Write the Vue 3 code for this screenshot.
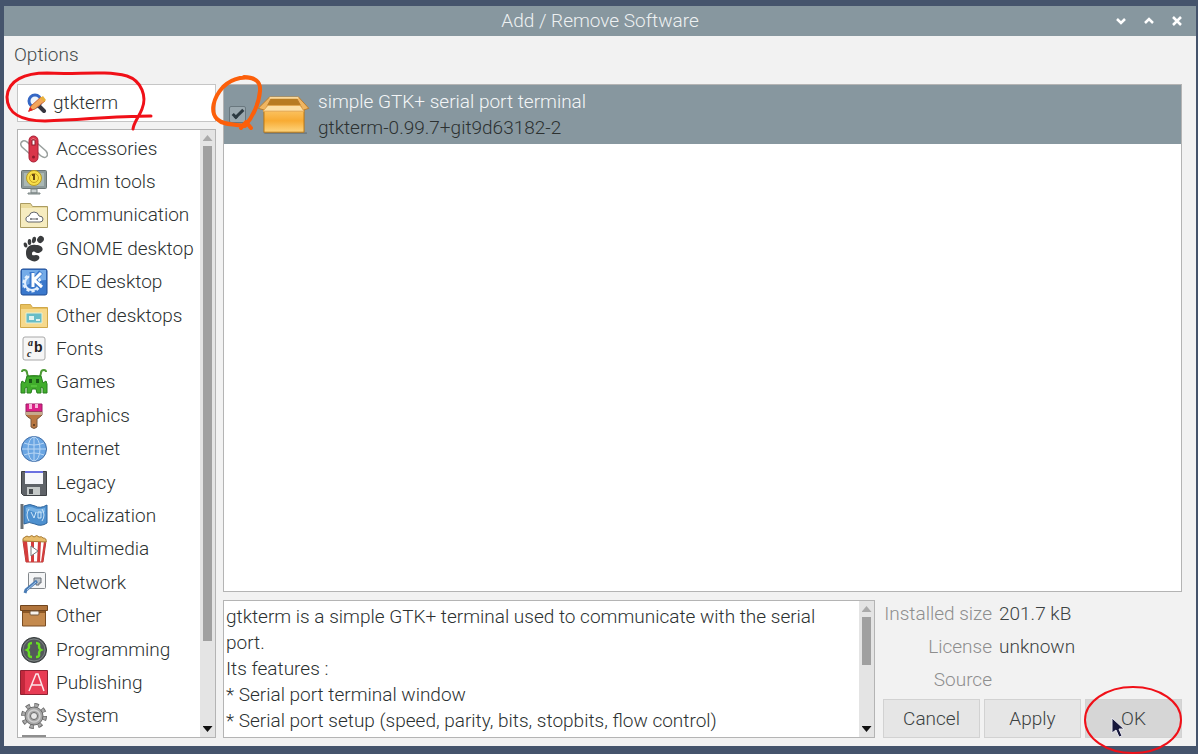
<template>
  <main class="desktop">
    <section class="window">
      <header class="titlebar">
        <h1>Add / Remove Software</h1>
        <div class="window-controls">
          <button type="button" aria-label="Minimize">
            <svg viewBox="0 0 12 12"><path d="M2 4l4 4 4-4" /></svg>
          </button>
          <button type="button" aria-label="Maximize">
            <svg viewBox="0 0 12 12"><path d="M2 8l4-4 4 4" /></svg>
          </button>
          <button type="button" aria-label="Close">
            <svg viewBox="0 0 12 12"><path d="M2 2l8 8M10 2l-8 8" /></svg>
          </button>
        </div>
      </header>

      <nav class="menubar">
        <button type="button">Options</button>
      </nav>

      <div class="body">
        <aside class="sidebar">
          <div class="search">
            <svg class="search-icon" viewBox="0 0 20 20" aria-hidden="true">
              <circle cx="8" cy="8" r="6" fill="#eef4fb" stroke="#3567c4" stroke-width="3" />
              <path d="M12 13l5 5" stroke="#35353f" stroke-width="4" stroke-linecap="round" />
              <path d="M2 18l2-5L14 4l4 4L8 16z" fill="#f3a55a" stroke="#c9683a" />
              <path d="M13 5l4 4 2-2-3-4z" fill="#e8b13c" />
              <path d="M1 19l2-5 3 3z" fill="#d22" />
            </svg>
            <input v-model="query" type="text" aria-label="Search packages" />
            <svg class="ink ink-search" viewBox="0 0 146 64" aria-hidden="true">
              <path d="M146 46C106 46 78 50 40 51C16 51 2 43 2 27C3 10 20 3 42 3C72 5 98 0 122 6C137 11 142 27 137 39C134 47 129 52 128 59" />
            </svg>
          </div>

          <div class="categories">
            <ul>
              <li v-for="item in categories" :key="item.name">
                <button type="button">
                  <svg viewBox="0 0 28 28" aria-hidden="true" v-html="item.icon"></svg>
                  <span>{{ item.name }}</span>
                </button>
              </li>
              <li class="peek"><i></i></li>
            </ul>
            <div class="scrollbar" aria-hidden="true">
              <i class="arrow up"></i>
              <div class="track"><i class="thumb" :style="{ height: listThumb + '%' }"></i></div>
              <i class="arrow down"></i>
            </div>
          </div>
        </aside>

        <div class="content">
          <div class="packages">
            <div class="package">
              <div class="tick">
                <input id="pkg" v-model="selected" type="checkbox" />
                <svg class="ink ink-tick" viewBox="0 0 54 60" aria-hidden="true">
                  <path d="M47 7C38 0 22 4 13 13C3 24 0 38 7 45C14 52 27 50 35 52C43 43 49 29 50 17C51 7 44 3 34 3M31 54L36 48L41 54" />
                </svg>
              </div>
              <svg class="box" viewBox="0 0 54 44" aria-hidden="true">
                <defs>
                  <linearGradient id="card" x1="0" y1="0" x2="0" y2="1">
                    <stop offset="0" stop-color="#fbc566" />
                    <stop offset=".5" stop-color="#f8ab33" />
                    <stop offset="1" stop-color="#fdd57f" />
                  </linearGradient>
                </defs>
                <path d="M5 40h46v2H7z" fill="#596168" opacity=".5" />
                <path d="M13 3h28l7 13H6z" fill="#9c6414" />
                <path d="M13 3h28l4 10H9z" fill="#b87c22" />
                <path d="M6 16h42v24H6z" fill="url(#card)" stroke="#b9730f" />
                <path d="M12 3L0 15l7 2 7-13zM42 3l11 12-6 2L40 4z" fill="#f0b560" stroke="#b87a2b" />
                <path d="M10 12h34l4 6H5z" fill="#fde0a6" stroke="#e2a650" />
                <path d="M12 4h30" stroke="#fbd99a" stroke-width="2" />
              </svg>
              <label for="pkg">
                <span class="summary">simple GTK+ serial port terminal</span>
                <span>gtkterm-0.99.7+git9d63182-2</span>
              </label>
            </div>
          </div>

          <div class="bottom">
            <div class="description">
              <div class="text">
                <p v-for="line in description" :key="line">{{ line }}</p>
              </div>
              <div class="scrollbar" aria-hidden="true">
                <i class="arrow up"></i>
                <div class="track"><i class="thumb" :style="{ height: textThumb + '%' }"></i></div>
                <i class="arrow down"></i>
              </div>
            </div>

            <div class="side">
              <dl>
                <template v-for="row in details" :key="row.label">
                  <dt>{{ row.label }}</dt>
                  <dd>{{ row.value }}</dd>
                </template>
              </dl>
              <div class="actions">
                <button type="button">Cancel</button>
                <button type="button">Apply</button>
                <button type="button" class="ok">
                  OK
                  <svg class="ink ink-ok" viewBox="0 0 100 70" aria-hidden="true">
                    <ellipse cx="50" cy="35" rx="48" ry="33" />
                  </svg>
                  <svg class="pointer" viewBox="0 0 14 21" aria-hidden="true">
                    <path d="M1 1v15l4-3 3 7 3-1-3-7h5z" fill="#17183c" stroke="#e8e8f0" />
                  </svg>
                </button>
              </div>
            </div>
          </div>
        </div>
      </div>
    </section>
  </main>
</template>

<script setup>
import { ref } from 'vue'

const query = ref('gtkterm')
const selected = ref(true)
const listThumb = 86
const textThumb = 46

const description = [
  'gtkterm is a simple GTK+ terminal used to communicate with the serial port.',
  'Its features :',
  '* Serial port terminal window',
  '* Serial port setup (speed, parity, bits, stopbits, flow control)',
]

const details = [
  { label: 'Installed size', value: '201.7 kB' },
  { label: 'License', value: 'unknown' },
  { label: 'Source', value: '' },
]

const categories = [
  {
    name: 'Accessories',
    icon: `<g fill="none" stroke="#9aa09e" stroke-width="1.5"><path d="M11 20L2 12q-3-4 1-6 3-1 8 5M17 8l9 8q3 4 0 6-3 2-9-5"/></g>
      <rect x="9" y="1" width="9" height="26" rx="4.5" fill="#d9364a" stroke="#a81f35"/>
      <path d="M11 5q2-3 5 0" stroke="#f08c95" fill="none"/><rect x="12" y="5" width="3" height="5" fill="#fff" stroke="#8d1c2c"/><circle cx="13.5" cy="22" r="1.5" fill="#8d1c2c"/>`,
  },
  {
    name: 'Admin tools',
    icon: `<rect x="1.5" y="2.5" width="25" height="18" rx="1" fill="#8d9a9a" stroke="#6a7575"/><path d="M4 5h20v13H4z" fill="#aab8b4"/>
      <path d="M11 21h6v4h-6zM8 25h12v1H8z" fill="#ccd3d3" stroke="#7b8584"/><circle cx="14" cy="10" r="7.5" fill="#f7df4b" stroke="#b79b24"/>
      <circle cx="14" cy="10" r="4.5" fill="none" stroke="#c79f20"/><path d="M14 6v6M12 7h2" stroke="#6a4b12" stroke-width="2"/>`,
  },
  {
    name: 'Communication',
    icon: `<path d="M.5 2.5h10l2 3h15v21H.5z" fill="#eadb9c" stroke="#ab9c62"/><path d="M1 7h26v19H1z" fill="#f6ecc0"/>
      <path d="M8 21q-3-1-2-4 1-2 3-2 1-4 5-4t5 4q4 0 4 3t-3 3z" fill="#fff" stroke="#62656b"/><path d="M10 18h8M11 17v2M17 17v2" stroke="#62656b"/>`,
  },
  {
    name: 'GNOME desktop',
    icon: `<g fill="#3a3c3e"><ellipse cx="5.5" cy="10" rx="1.8" ry="2.6" transform="rotate(-20 5.500 10)"/><ellipse cx="9.500" cy="7" rx="1.8" ry="3"/>
      <ellipse cx="14" cy="5" rx="2" ry="3.200" transform="rotate(10 14 5)"/><ellipse cx="20.500" cy="4.500" rx="3.200" ry="3.600" transform="rotate(35 20.500 4.500)"/>
      <path d="M6 18C6 12 10 9 16 10c5 0 8 3 6 6-2 2-5 3-7 1-2-1-3 0-3 2s2 1 4 1c3 0 4 2 3 4-2 3-6 3-9 1-3-1-4-4-4-7z"/></g>`,
  },
  {
    name: 'KDE desktop',
    icon: `<rect x="1" y="1" width="26" height="26" rx="2" fill="#3a78cc" stroke="#1d4a93"/><path d="M2 2h24v10Q14 12 2 20z" fill="#74abe8"/>
      <circle cx="12" cy="15" r="8" fill="none" stroke="#e2effd" stroke-width="3" stroke-dasharray="3 2"/><circle cx="12" cy="15" r="7" fill="none" stroke="#e2effd" stroke-width="2"/>
      <path d="M12 4v16M21 4l-7 8 8 8" stroke="#3a78cc" stroke-width="5" fill="none"/><path d="M13 5v14M21 5l-7 7 8 7" stroke="#fff" stroke-width="3" fill="none"/>`,
  },
  {
    name: 'Other desktops',
    icon: `<path d="M.5 2.5h10l2 3h15v20H.5z" fill="#e8c05e" stroke="#d0a84a"/><path d="M1 7h26v18H1z" fill="#f6d98c"/>
      <path d="M6 11h16v10H6z" fill="#69bdc7" stroke="#e7f0d4"/><path d="M9 14h5v4H9zM16 17h4v2h-4z" fill="#e0f3f0"/>`,
  },
  {
    name: 'Fonts',
    icon: `<rect x="3" y="2" width="22" height="23" rx="2" fill="#f6f6f6" stroke="#a8a8a8"/>
      <g fill="#222" font-weight="700"><text x="8" y="11" font-family="Liberation Serif" font-size="10" font-style="italic">a</text>
      <text x="14" y="17" font-family="Liberation Sans" font-size="14">b</text>
      <text x="7" y="22" font-family="Liberation Serif" font-size="10" font-style="italic">c</text></g>`,
  },
  {
    name: 'Games',
    icon: `<path d="M2 4q0-2 2-2 3 0 3 3l1 4q6-2 12 0l1-4q0-3 3-3 2 0 2 2" fill="none" stroke="#4d9a35" stroke-width="2"/>
      <path d="M7 8h14l2 7 3-2 1 3v9h-4v-5l-2-1v6h-4l-1-4h-4l-1 4H7v-6l-2 1v5H1v-9l1-3 3 2z" fill="#41ad2c" stroke="#267e1d"/>
      <path d="M9 11h3v4H9zM16 11h3v4h-3z" fill="#1a5b16"/><path d="M11 18h6" stroke="#6bd64c"/>`,
  },
  {
    name: 'Graphics',
    icon: `<path d="M6 2h16v8H6z" fill="#dc2087" stroke="#9c1c66"/><path d="M9 2v5h3V2M15 2v4h3V2" fill="#f8b5da"/>
      <path d="M6 10h16v3q-3 3-5 4v8q-3 3-6 0v-8q-4-2-5-4z" fill="#b97741" stroke="#7a5a40"/><path d="M6 10h16v3H6z" fill="#c6a98c"/><circle cx="14" cy="23" r="1" fill="#53331b"/>`,
  },
  {
    name: 'Internet',
    icon: `<circle cx="14" cy="14" r="12.5" fill="#6aa5e2" stroke="#3f6ca6"/><g fill="none" stroke="#b9d7f5"><ellipse cx="14" cy="14" rx="6" ry="12"/>
      <path d="M14 2v24M2 14h24M4 8q10 4 20 0M4 20q10-4 20 0"/></g>`,
  },
  {
    name: 'Legacy',
    icon: `<path d="M1.5 2.5h25v24h-23l-2-2z" fill="#5f6368" stroke="#3d4043"/><path d="M5 2h18v13H5z" fill="#f5f6fa"/><path d="M5 2h18v2H5z" fill="#6a70e0"/>
      <path d="M7 18h13v8H7z" fill="#c5c9c8"/><path d="M9 20h4v5H9z" fill="#4b4f52"/>`,
  },
  {
    name: 'Localization',
    icon: `<path d="M2 2v25" stroke="#6b7074" stroke-width="3"/><path d="M4 4q6-3 11 0t12-1v18q-6 4-12 1T4 22z" fill="#4d90cf" stroke="#2f659c"/>
      <path d="M6 6q4-2 8 0t11 0v4q-6 3-11 0T6 10z" fill="#78b2e4"/><path d="M9 7q-4 6 0 12M22 7q4 6 0 12" fill="none" stroke="#cfe6f8"/>
      <path d="M11 10l3 6 2-6M18 10v6h3v-6z" stroke="#cfe6f8" fill="none"/>`,
  },
  {
    name: 'Multimedia',
    icon: `<path d="M3 6h23l-3 21H6z" fill="#fff" stroke="#b13b36"/><path d="M3 6h4l2 21H6zM11 6h3v21h-3zM18 6h3l-1 21h-3zM24 6h2l-3 21h-2z" fill="#d43c3c"/>
      <path d="M3 6q-1-3 2-4 2-2 4 0 3-3 5 0 3-3 5 0 3-1 4 1 4 0 3 4z" fill="#e8bd6a" stroke="#a67a35"/><path d="M11 11l7 5-7 5z" fill="#fff" stroke="#777"/>`,
  },
  {
    name: 'Network',
    icon: `<rect x="8.500" y="3.500" width="17" height="16" rx="1" fill="#f4f5f6" stroke="#82878b"/><path d="M14 14V9h7v5h-2v2h-3v-2z" fill="#bcc3ca" stroke="#666d74"/>
      <path d="M17 12L6 21l-1 3" stroke="#4a7cb5" stroke-width="3" fill="none"/><path d="M16 13L7 21" stroke="#a8c8ea" fill="none"/>`,
  },
  {
    name: 'Other',
    icon: `<path d="M2.5 8h23v16h-23z" fill="#c48a4e" stroke="#7a4d22"/><path d="M.5 3.5h27v5H.5z" fill="#b0743c" stroke="#70451e"/>
      <path d="M3 9h22v2H3z" fill="#8e5926"/><rect x="10" y="9" width="9" height="4" rx="1" fill="#f6f2ec" stroke="#77593a"/>`,
  },
  {
    name: 'Programming',
    icon: `<circle cx="14" cy="14" r="12.5" fill="#53595a" stroke="#34393a"/><circle cx="14" cy="14" r="11" fill="none" stroke="#7c8382"/>
      <path d="M12 7q-4 0-3 4 0 2-2 3 2 1 2 3-1 4 3 4M16 7q4 0 3 4 0 2 2 3-2 1-2 3 1 4-3 4" fill="none" stroke="#66dd22" stroke-width="2.5"/>`,
  },
  {
    name: 'Publishing',
    icon: `<path d="M.5 1.5h27v24H.5z" fill="#e83c54" stroke="#8f2232"/><path d="M1 2h4v23H1z" fill="#c4283c"/>
      <path d="M9 22l7-17h2l6 17M12 16h10" fill="none" stroke="#fbe6e9" stroke-width="1.5"/>`,
  },
  {
    name: 'System',
    icon: `<circle cx="14" cy="14" r="10.5" fill="none" stroke="#6a6a6a" stroke-width="5" stroke-dasharray="4.2 4.046"/>
      <circle cx="14" cy="14" r="10.5" fill="none" stroke="#a9a9a9" stroke-width="3" stroke-dasharray="3 5.246" stroke-dashoffset="-.6"/>
      <circle cx="14" cy="14" r="9" fill="#a6a6a6" stroke="#6a6a6a"/><circle cx="14" cy="14" r="6" fill="none" stroke="#cfcfcf" stroke-width="1.5"/><circle cx="14" cy="14" r="3.5" fill="#e8e8e8" stroke="#666"/>`,
  },
]
</script>

<style>
body {
  background: #45546c;
}
</style>

<style scoped>
.desktop {
  box-sizing: border-box;
  display: flex;
  min-height: 100vh;
  padding: 6px 2px 8px 4px;
  background: #45546c;
  color: #2c3131;
  font-family: Roboto, "Noto Sans", sans-serif;
  font-size: 19px;
  font-weight: 300;
  line-height: 26px;
}

.desktop *,
.desktop *::before {
  box-sizing: border-box;
}

button,
input {
  color: inherit;
  font: inherit;
}

button {
  padding: 0;
  border: 0;
  background: none;
}

ul,
p,
dl,
dd,
h1 {
  margin: 0;
  padding: 0;
}

.window {
  display: flex;
  flex: 1;
  flex-direction: column;
  min-width: 0;
  background: #f2f2f2;
}

.titlebar {
  display: grid;
  grid-template-columns: 1fr auto 1fr;
  align-items: center;
  height: 30px;
  background: #87979f;
  color: #eef1f2;
}

.titlebar h1 {
  grid-column: 2;
  font-size: 19px;
  font-weight: 300;
}

.window-controls {
  display: flex;
  justify-content: flex-end;
  gap: 16px;
  padding-right: 13px;
}

.window-controls button {
  display: flex;
}

.window-controls svg {
  width: 12px;
  height: 12px;
  fill: none;
  stroke: #fff;
  stroke-width: 2.5;
}

.menubar {
  padding: 6px 10px 16px;
  color: #454b4b;
}

.menubar button {
  display: block;
}

.body {
  display: flex;
  flex: 1;
  gap: 7px;
  padding: 0 14px 8px 13px;
}

.sidebar {
  display: flex;
  flex: 0 0 199px;
  flex-direction: column;
  gap: 7px;
}

.search {
  position: relative;
  display: flex;
  align-items: center;
  gap: 6px;
  height: 38px;
  padding: 0 9px;
  border: 1px solid #c6c6c6;
  background: #fff;
}

.search-icon {
  flex: none;
  width: 20px;
  height: 20px;
}

.search input {
  width: 100%;
  min-width: 0;
  padding: 0;
  border: 0;
  outline: 0;
  background: none;
}

.ink {
  position: absolute;
  z-index: 2;
  overflow: visible;
  fill: none;
  stroke: #f01018;
  stroke-width: 3;
  stroke-linecap: round;
  stroke-linejoin: round;
  pointer-events: none;
}

.ink-search {
  top: -15px;
  left: -13px;
  width: 146px;
  height: 64px;
}

.categories {
  display: flex;
  flex: 1;
  border: 1px solid #b4b4b4;
  background: #fff;
}

.categories ul {
  display: flex;
  flex: 1;
  flex-direction: column;
  min-width: 0;
  padding-top: 2px;
  list-style: none;
}

.categories li {
  display: flex;
  flex: 1;
}

.categories li button {
  display: flex;
  align-items: center;
  gap: 8px;
  padding-left: 2px;
  white-space: nowrap;
}

.categories li svg {
  width: 28px;
  height: 28px;
}

.categories .peek {
  flex: 0 0 4px;
  padding: 2px 4px 0;
}

.peek i {
  width: 24px;
  background: #8f8f8f;
}

.scrollbar {
  display: flex;
  flex: 0 0 15px;
  flex-direction: column;
  align-items: center;
  background: #e4e4e4;
}

.track {
  flex: 1;
  width: 9px;
}

.thumb {
  display: block;
  background: #a0a0a0;
}

.arrow {
  width: 10px;
  height: 6px;
  margin: 5px 0;
}

.up {
  background: #aaa;
  clip-path: polygon(50% 0, 100% 100%, 0 100%);
}

.down {
  background: #111;
  clip-path: polygon(0 0, 100% 0, 50% 100%);
}

.content {
  display: flex;
  flex: 1;
  flex-direction: column;
  gap: 8px;
  min-width: 0;
}

.packages {
  flex: 1;
  border: 1px solid #b4b4b4;
  background: #fff;
}

.package {
  display: flex;
  align-items: center;
  height: 59px;
  padding-left: 5px;
  background: #87979f;
}

.tick {
  position: relative;
  display: flex;
  margin-right: 12px;
}

.tick input {
  display: grid;
  place-items: center;
  width: 17px;
  height: 17px;
  margin: 0;
  border: 1px solid #69777e;
  border-radius: 2px;
  background: #9aa8af;
  appearance: none;
}

.tick input:checked::before {
  content: "";
  width: 12px;
  height: 6px;
  border: solid #2c3a42;
  border-width: 0 0 3px 3px;
  transform: translateY(-2px) rotate(-45deg);
}

.ink-tick {
  top: -32px;
  left: -19px;
  width: 54px;
  height: 60px;
  stroke: #fc5f0a;
  stroke-width: 4;
}

.box {
  flex: none;
  width: 52px;
  height: 42px;
  margin-right: 8px;
}

.package label {
  display: flex;
  flex-direction: column;
}

.summary {
  color: #f4f6f7;
}

.bottom {
  display: flex;
  gap: 8px;
}

.description {
  display: flex;
  flex: 1;
  min-width: 0;
  height: 138px;
  border: 1px solid #b4b4b4;
  background: #fff;
}

.text {
  flex: 1;
  padding: 3px 2px;
  overflow: hidden;
}

.side {
  display: flex;
  flex: 0 0 299px;
  flex-direction: column;
  justify-content: space-between;
}

dl {
  display: grid;
  grid-template-columns: 109px 1fr;
  column-gap: 7px;
  margin-top: -3px;
  line-height: 33px;
}

dt {
  color: #8e8e8e;
  text-align: right;
  white-space: nowrap;
}

dd {
  color: #3c4242;
}

.actions {
  display: flex;
  gap: 4px;
}

.actions button {
  position: relative;
  flex: 1;
  height: 39px;
  border: 1px solid #d2d2d2;
  background: #e6e6e6;
  color: #3c4242;
}

.actions .ok {
  background: #d6d6d6;
}

.ink-ok {
  top: -15px;
  left: -3px;
  width: 100px;
  height: 70px;
  stroke-width: 2;
}

.pointer {
  position: absolute;
  top: 17px;
  left: 25px;
  width: 14px;
  height: 21px;
}
</style>
